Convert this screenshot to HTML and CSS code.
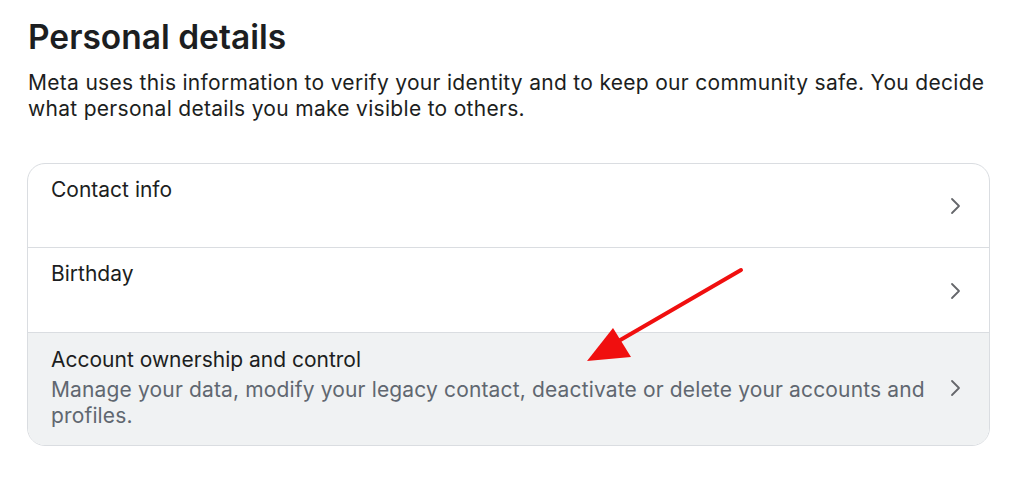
FILE: index.html
```html
<!DOCTYPE html>
<html>
<head>
<meta charset="utf-8">
<link rel="stylesheet" href="styles.css">
</head>
<body>
<main class="page">
  <h1 class="title">Personal details</h1>
  <p class="desc">Meta uses this information to verify your identity and to keep our community safe. You decide what personal details you make visible to others.</p>
  <div class="card">
    <div class="row">
      <div class="text"><div class="label">Contact info</div></div>
      <svg class="chev" viewBox="0 0 12 18" width="12" height="18"><path d="M3 2 L10 9 L3 16" fill="none" stroke="#65676b" stroke-width="1.8" stroke-linecap="round" stroke-linejoin="round"/></svg>
    </div>
    <div class="row">
      <div class="text"><div class="label">Birthday</div></div>
      <svg class="chev" viewBox="0 0 12 18" width="12" height="18"><path d="M3 2 L10 9 L3 16" fill="none" stroke="#65676b" stroke-width="1.8" stroke-linecap="round" stroke-linejoin="round"/></svg>
    </div>
    <div class="row row-active">
      <div class="text">
        <div class="label">Account ownership and control</div>
        <div class="sub">Manage your data, modify your legacy contact, deactivate or delete your accounts and profiles.</div>
      </div>
      <svg class="chev" viewBox="0 0 12 18" width="12" height="18"><path d="M3 2 L10 9 L3 16" fill="none" stroke="#65676b" stroke-width="1.8" stroke-linecap="round" stroke-linejoin="round"/></svg>
    </div>
  </div>
</main>
<svg class="arrow" width="1024" height="492" viewBox="0 0 1024 492">
  <line x1="741" y1="270" x2="610" y2="346" stroke="#f00f0f" stroke-width="4" stroke-linecap="round"/>
  <polygon points="587,361 613,328 631,357" fill="#f00f0f"/>
</svg>
</body>
</html>
```
FILE: styles.css
```css
html, body {
  margin: 0;
  padding: 0;
  background: #ffffff;
}
body {
  font-family: "Inter", "Liberation Sans", sans-serif;
  color: #1c1e21;
  width: 1024px;
  height: 492px;
  overflow: hidden;
  position: relative;
}
.page {
  padding: 17px 34px 0 27px;
}
.title {
  margin: 0 0 0 1px;
  font-size: 33.5px;
  line-height: 40px;
  font-weight: 600;
  letter-spacing: 0;
}
.desc {
  margin: 13px 0 0 1px;
  font-size: 21px;
  line-height: 26px;
  letter-spacing: 0.3px;
  color: #1c1e21;
}
.card {
  margin-top: 41px;
  border: 1px solid #dadde1;
  border-radius: 18px;
  overflow: hidden;
}
.row {
  display: flex;
  align-items: center;
  border-top: 1px solid #dadde1;
  padding: 13px 28px 12px 23px;
  min-height: 59px;
}
.row:first-child {
  border-top: none;
  min-height: 58px;
}
.row-active {
  background: #f0f2f3;
  padding-top: 14px;
  padding-bottom: 16px;
}
.text {
  flex: 1;
  align-self: flex-start;
}
.label {
  font-size: 21px;
  line-height: 26px;
  color: #1c1e21;
}
.sub {
  font-size: 21px;
  line-height: 26px;
  letter-spacing: 0.15px;
  color: #606770;
  margin-top: 4px;
}
.chev {
  flex: none;
  margin-left: 20px;
}
.arrow {
  position: absolute;
  left: 0;
  top: 0;
  pointer-events: none;
}
```
